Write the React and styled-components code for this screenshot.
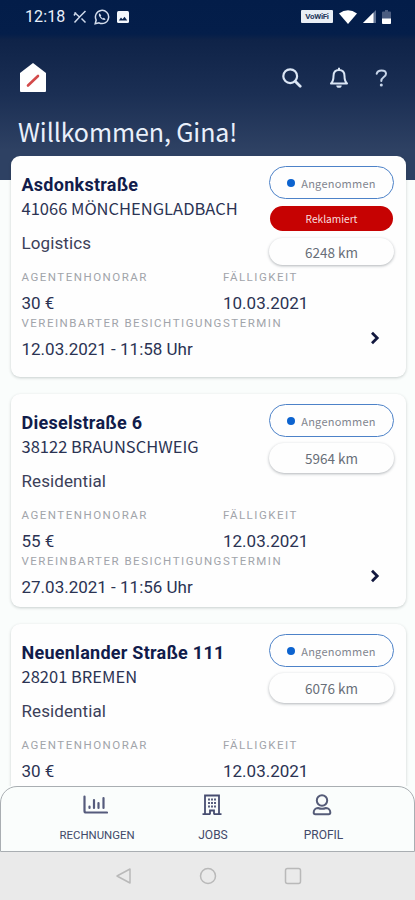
// src/App.jsx
import React from 'react';
import styled, { createGlobalStyle } from 'styled-components';

const SOURCE = '"Noto Sans CJK SC", "Noto Sans", sans-serif';

const GlobalStyle = createGlobalStyle`
    * {
        box-sizing: border-box;
    }

    body {
        margin: 0;
        background-color: #fafdfc;
        font-family: Roboto, sans-serif;
        overflow: hidden;
    }
`;

const Screen = styled.div`
    display: flex;
    flex-direction: column;
    width: 415px;
    height: 900px;
    overflow: hidden;
    background-color: #fafdfc;
`;

const Header = styled.header`
    flex: none;
    height: 180px;
    color: #e9f0fb;
    background: linear-gradient(#031d49 0, #041e4a 34px, #0f2348 40px, #1b2f54 95px, #2e4163 150px, #2e4163 180px);
`;

const StatusBar = styled.div`
    display: flex;
    align-items: center;
    justify-content: space-between;
    height: 33px;
    padding: 0 24px 0 25px;
`;

const StatusGroup = styled.div`
    display: flex;
    align-items: center;
    gap: ${(props) => props.$gap}px;
`;

const Clock = styled.span`
    width: 41px;
    font-size: 16px;
    line-height: 33px;
    letter-spacing: 0.1px;
    white-space: nowrap;
`;

const VoWifi = styled.span`
    width: 32px;
    height: 13px;
    border-radius: 1px;
    background-color: #e9eef5;
    color: #26395c;
    font-size: 8px;
    font-weight: 700;
    line-height: 13px;
    text-align: center;
    letter-spacing: -0.3px;
`;

const TopBar = styled.div`
    display: flex;
    align-items: center;
    justify-content: space-between;
    height: 86px;
    padding: 3px 27px 0 19px;
`;

const Greeting = styled.h1`
    margin: 0;
    padding-left: 18px;
    font-family: ${SOURCE};
    font-size: 25px;
    font-weight: 400;
    line-height: 24px;
    letter-spacing: -0.1px;
    white-space: nowrap;
`;

const JobList = styled.main`
    flex: 1;
    min-height: 0;
    display: flex;
    flex-direction: column;
    gap: 17px;
    margin-top: -24px;
    padding: 0 9px 0 11px;
    overflow: hidden;
`;

const Card = styled.article`
    flex: none;
    display: flex;
    justify-content: space-between;
    height: ${(props) => props.$height}px;
    padding: 17px 11px 0 10.5px;
    border-radius: 9px;
    background-color: #fefefe;
    box-shadow: 0 1px 3px rgba(40, 60, 60, 0.24);
    color: #2b3353;
`;

const Details = styled.div`
    width: 201px;
    white-space: nowrap;
`;

const Street = styled.h2`
    margin: 0;
    color: #111c4b;
    font-size: 18px;
    font-weight: 700;
    line-height: 24px;
    letter-spacing: 0.26px;
`;

const City = styled.div`
    margin-top: -1px;
    font-family: ${SOURCE};
    font-size: 16.5px;
    line-height: 24px;
`;

const Kind = styled.div`
    margin-top: 11px;
    font-size: 17px;
    line-height: 24px;
    letter-spacing: 0.1px;
    color: #3b4059;
`;

const Label = styled.div`
    margin-top: ${(props) => props.$top || 0}px;
    color: #a1a4aa;
    font-size: 11.5px;
    line-height: 14px;
    letter-spacing: 1.5px;
`;

const Value = styled.div`
    margin-top: 7px;
    font-size: 17px;
    line-height: 24px;
`;

const Side = styled.div`
    display: flex;
    flex-direction: column;
    width: 172px;
    margin: -7px 0 0;
    white-space: nowrap;
`;

const Pills = styled.div`
    display: flex;
    flex-direction: column;
    align-self: flex-end;
    gap: ${(props) => props.$gap}px;
    width: 125px;
    height: 104px;
    margin-right: 1px;
`;

const Pill = styled.div`
    display: flex;
    align-items: center;
    justify-content: center;
    flex: none;
    border-radius: 17px;
    font-family: ${SOURCE};
`;

const StatusPill = styled(Pill)`
    gap: 6px;
    height: 33px;
    border: 1.5px solid #4d82c8;
    color: #81858e;
    font-size: 11px;
    letter-spacing: 0.25px;
`;

const StatusDot = styled.span`
    width: 8px;
    height: 8px;
    border-radius: 50%;
    background-color: #0c63cf;
`;

const ClaimPill = styled(Pill)`
    height: 25px;
    margin: 0 1px;
    background-color: #c60202;
    color: #f8dede;
    font-size: 10.2px;
`;

const DistancePill = styled(Pill)`
    height: ${(props) => props.$height}px;
    box-shadow: 0 1px 3px rgba(40, 50, 60, 0.36);
    color: #686e78;
    font-size: 13.5px;
`;

const ChevronRow = styled.div`
    display: flex;
    justify-content: flex-end;
    margin: 16px 15px 0 0;
`;

const TabBar = styled.nav`
    flex: none;
    display: grid;
    grid-template-columns: 96px 136px 85px;
    justify-content: start;
    height: 66px;
    padding: 7px 0 0 48px;
    border: 1px solid #a9aeb2;
    border-radius: 17px 17px 0 0;
    background-color: #fafdfc;
`;

const Tab = styled.div`
    display: flex;
    flex-direction: column;
    align-items: center;
    color: #414969;
    font-size: ${(props) => props.$size || 12}px;
    line-height: 16px;
    white-space: nowrap;
`;

const TabIcon = styled.span`
    display: flex;
    align-items: center;
    height: 22px;
    margin: 0 3px 11px 0;
`;

const SystemNav = styled.div`
    flex: none;
    display: flex;
    align-items: center;
    justify-content: center;
    gap: 67px;
    height: 48px;
    padding-left: 1px;
    background-color: #eaeaea;
`;

const MissedCallIcon = () => (
    <svg width="14" height="14" viewBox="0 0 14 14" fill="none" stroke="#cfd9ea" strokeWidth="1.5">
        <path d="M12.5 1 7 6.5 1.5 12.5M1.5 2.500l5 4.500M8.500 8.500l4 4M1 5.500l2-3" />
    </svg>
);

const WhatsAppIcon = () => (
    <svg width="16" height="16" viewBox="0 0 16 16" fill="none" stroke="#d4ddec" strokeWidth="1.5">
        <path d="M1.2 14.8 2.2 11A6.6 6.6 0 1 1 5 13.8Z" />
        <path d="M5.600 4.200c-1.700 1.200-.2 3.700 1.200 5s3.600 2.600 4.900 1.100l-1.900-1.500-1.200.8-2-2 .7-1.200Z" fill="#d4ddec" stroke="none" />
    </svg>
);

const PictureIcon = () => (
    <svg width="12" height="12" viewBox="0 0 12 12">
        <rect width="12" height="12" rx="1.5" fill="#f3f7fc" />
        <path d="M1.8 9.5 4 6.5l1.5 1.8 2-2.6 2.8 3.8Z" fill="#0a234f" />
    </svg>
);

const WifiIcon = () => (
    <svg width="18" height="14" viewBox="0 0 18 14">
        <path d="M0 3.5Q9-3 18 3.5L9 14Z" fill="#fff" />
    </svg>
);

const SignalIcon = () => (
    <svg width="13" height="13" viewBox="0 0 13 13">
        <path d="M0 13 13 0v13Z" fill="#5f7192" />
        <path d="M0 13 10.500 2.500v10.500Z" fill="#fff" />
    </svg>
);

const BatteryIcon = () => (
    <svg width="9" height="14" viewBox="0 0 9 14">
        <path d="M1 1.5h2V0h3v1.5h2q1 0 1 1V13q0 1-1 1H1q-1 0-1-1V2.5q0-1 1-1Z" fill="#4b5d80" />
        <path d="M0 8.5h9V13q0 1-1 1H1q-1 0-1-1Z" fill="#fff" />
    </svg>
);

const HouseLogo = () => (
    <svg width="28" height="30" viewBox="0 0 28 30">
        <path d="M14 0 27 10v18q0 1-1 1H2q-1 0-1-1V10Z" fill="#fff" />
        <path d="m9 22.5 10-9.5" stroke="#d34a4a" strokeWidth="2.6" strokeLinecap="round" />
    </svg>
);

const SearchIcon = () => (
    <svg width="20" height="20" viewBox="0 0 20 20" fill="none" stroke="#dbe6f5" strokeWidth="2.2">
        <circle cx="8.2" cy="8.2" r="6.9" />
        <path d="m13.2 13.2 5 5" strokeWidth="2.8" strokeLinecap="round" />
    </svg>
);

const BellIcon = () => (
    <svg width="20" height="22" viewBox="0 0 20 22" fill="none" stroke="#dbe6f5" strokeWidth="2">
        <path d="M10 .8v2M2 16.5h16c-1.700-1.600-2.500-4-2.500-7.500 0-3.800-2.300-6-5.500-6S4.500 5.200 4.500 9c0 3.500-.8 5.900-2.500 7.500Z" strokeLinejoin="round" />
        <path d="M7.300 18.500h5.400a2.700 2.300 0 0 1-5.400 0Z" fill="#dbe6f5" stroke="none" />
    </svg>
);

const HelpIcon = () => (
    <svg width="13" height="18" viewBox="0 0 13 18" fill="none" stroke="#c7d5e9" strokeWidth="2">
        <path d="M1.700 4.800C2.200 2.400 3.900 1.400 6.500 1.400c2.800 0 4.500 1.300 4.500 3.400 0 3.400-4.700 3.200-4.700 7.200" strokeLinecap="round" />
        <circle cx="6.300" cy="16" r="1.500" fill="#c7d5e9" stroke="none" />
    </svg>
);

const Chevron = () => (
    <svg width="10" height="14" viewBox="0 0 10 14" fill="none" stroke="#12183f" strokeWidth="2.800">
        <path d="m2 1.800 5.200 5.200L2 12.200" />
    </svg>
);

const ChartIcon = () => (
    <svg width="25" height="20" viewBox="0 0 25 20" fill="none" stroke="#555b7c" strokeWidth="2" strokeLinecap="round">
        <path d="M1.500 1.500v14.500q0 1.500 1.500 1.500H24M6.500 11.500v1.500M11 5v8M15.500 8v5M20.500 3v10" strokeWidth="2.200" />
    </svg>
);

const BuildingIcon = () => (
    <svg width="20" height="22" viewBox="0 0 20 22" fill="none" stroke="#464d70" strokeWidth="1.800">
        <path d="M3 20V1.500h14V20M.5 20.200H8M12 20.200h7.500M8 20.500v-4h4v4" />
        <path d="M7 4.500v10M10 4.500v10M13 4.500v10" strokeDasharray="2 1.500" />
    </svg>
);

const PersonIcon = () => (
    <svg width="20" height="22" viewBox="0 0 20 22" fill="none" stroke="#555c78" strokeWidth="2">
        <circle cx="10" cy="6.500" r="5.200" />
        <path d="M6 14q4 1.600 8 0c2.600 0 4.300 2 4.300 4.500q0 1.700-1.600 1.700H3.300q-1.600 0-1.600-1.700C1.700 16 3.400 14 6 14Z" strokeLinejoin="round" />
    </svg>
);

const BackIcon = () => (
    <svg width="17" height="18" viewBox="0 0 17 18" fill="none" stroke="#b9b9b9" strokeWidth="1.5">
        <path d="M15 2v14L2 9Z" strokeLinejoin="round" />
    </svg>
);

const HomeIcon = () => (
    <svg width="18" height="18" viewBox="0 0 18 18" fill="none" stroke="#b9b9b9" strokeWidth="1.5">
        <circle cx="9" cy="9" r="7.5" />
    </svg>
);

const RecentIcon = () => (
    <svg width="18" height="18" viewBox="0 0 18 18" fill="none" stroke="#b9b9b9" strokeWidth="1.5">
        <rect x="1.5" y="1.5" width="15" height="15" rx="2" />
    </svg>
);

const jobs = [
    {
        street: 'Asdonkstraße',
        city: '41066 MÖNCHENGLADBACH',
        kind: 'Logistics',
        fee: '30 €',
        due: '10.03.2021',
        visit: '12.03.2021 - 11:58 Uhr',
        distance: '6248 km',
        claimed: true,
        height: 221,
    },
    {
        street: 'Dieselstraße 6',
        city: '38122 BRAUNSCHWEIG',
        kind: 'Residential',
        fee: '55 €',
        due: '12.03.2021',
        visit: '27.03.2021 - 11:56 Uhr',
        distance: '5964 km',
        height: 213,
    },
    {
        street: 'Neuenlander Straße 111',
        city: '28201 BREMEN',
        kind: 'Residential',
        fee: '30 €',
        due: '12.03.2021',
        visit: '',
        distance: '6076 km',
        height: 213,
    },
];

const JobCard = ({ job }) => (
    <Card $height={job.height}>
        <Details>
            <Street>{job.street}</Street>
            <City>{job.city}</City>
            <Kind>{job.kind}</Kind>
            <Label $top={15}>AGENTENHONORAR</Label>
            <Value>{job.fee}</Value>
            {job.visit && (
                <>
                    <Label $top={1}>VEREINBARTER BESICHTIGUNGSTERMIN</Label>
                    <Value>{job.visit}</Value>
                </>
            )}
        </Details>
        <Side>
            <Pills $gap={job.claimed ? 7 : 6}>
                <StatusPill>
                    <StatusDot />
                    Angenommen
                </StatusPill>
                {job.claimed && <ClaimPill>Reklamiert</ClaimPill>}
                <DistancePill $height={job.claimed ? 27 : 30}>{job.distance}</DistancePill>
            </Pills>
            <Label>FÄLLIGKEIT</Label>
            <Value>{job.due}</Value>
            {job.visit && (
                <ChevronRow>
                    <Chevron />
                </ChevronRow>
            )}
        </Side>
    </Card>
);

const App = () => {
    return (
        <Screen>
            <GlobalStyle />
            <Header>
                <StatusBar>
                    <StatusGroup $gap={7}>
                        <Clock>12:18</Clock>
                        <MissedCallIcon />
                        <WhatsAppIcon />
                        <PictureIcon />
                    </StatusGroup>
                    <StatusGroup $gap={6}>
                        <VoWifi>VoWiFi</VoWifi>
                        <WifiIcon />
                        <SignalIcon />
                        <BatteryIcon />
                    </StatusGroup>
                </StatusBar>
                <TopBar>
                    <HouseLogo />
                    <StatusGroup $gap={26.5}>
                        <SearchIcon />
                        <BellIcon />
                        <HelpIcon />
                    </StatusGroup>
                </TopBar>
                <Greeting>Willkommen, Gina!</Greeting>
            </Header>
            <JobList>
                {jobs.map((job) => (
                    <JobCard key={job.street} job={job} />
                ))}
            </JobList>
            <TabBar>
                <Tab $size={11.4}>
                    <TabIcon>
                        <ChartIcon />
                    </TabIcon>
                    RECHNUNGEN
                </Tab>
                <Tab>
                    <TabIcon>
                        <BuildingIcon />
                    </TabIcon>
                    JOBS
                </Tab>
                <Tab>
                    <TabIcon>
                        <PersonIcon />
                    </TabIcon>
                    PROFIL
                </Tab>
            </TabBar>
            <SystemNav>
                <BackIcon />
                <HomeIcon />
                <RecentIcon />
            </SystemNav>
        </Screen>
    );
};

export default App;
